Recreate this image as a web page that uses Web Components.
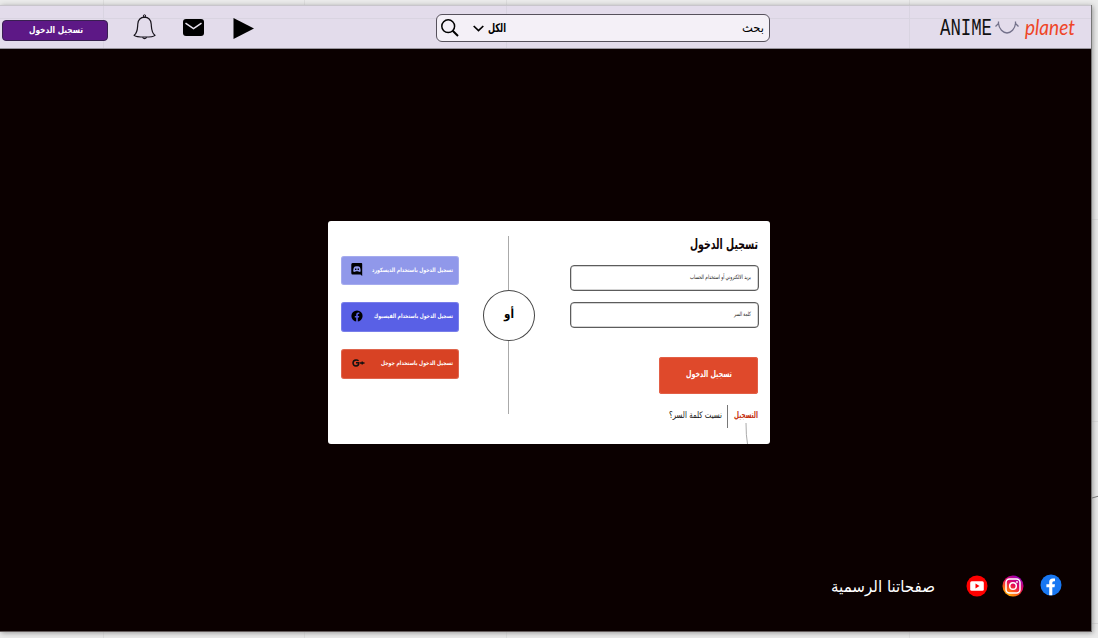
<!DOCTYPE html>
<html lang="ar"><head><meta charset="utf-8"><title>Anime planet</title>
<style>html,body{margin:0;width:1098px;height:638px;overflow:hidden;background:#eaeaea}</style></head>
<body><anime-page></anime-page>
<script>
class FitText extends HTMLElement{
  connectedCallback(){
    const a=(n,d)=>this.getAttribute(n)||d;
    const w=+a('w'),s=+a('s'),ltr=this.hasAttribute('ltr'),h=Math.ceil(s*1.6);
    this.attachShadow({mode:'open'}).innerHTML=`<style>:host{display:block;flex:none;width:${w}px;height:${h}px}svg{display:block;overflow:visible}text{font:${a('fs','normal')} ${a('wt','400')} ${s}px ${a('font',"'DejaVu Sans'")},sans-serif;fill:currentColor}</style>
    <svg width="${w}" height="${h}"><text x="${ltr?0:w}" y="${s*1.15}" direction="${ltr?'ltr':'rtl'}" textLength="${w}" lengthAdjust="spacingAndGlyphs">${this.textContent}</text></svg>`;
  }
}
customElements.define('fit-text',FitText);

const icons={
 bell:['0 0 24 26','<path d="M1.200 21.300C4.800 18.500 4.400 14.500 4.800 10C5.200 6 7.500 3.300 11.500 3.200C15.500 3.300 17.800 6 18.200 10C18.600 14.500 18.200 18.500 21.900 21.300C21 22.300 17 23 11.800 23C6.500 23 2 22.300 1.200 21.300Z" fill="none" stroke="#17131c" stroke-width="1.200"/><circle cx="11.500" cy="2" r="1.200" fill="none" stroke="#17131c"/><path d="M9.500 23.300q2 2.500 4.200 0" fill="none" stroke="#17131c" stroke-width="1.200"/>'],
 mail:['0 0 21 17','<rect width="21" height="17" rx="3"/><path d="M2.500 4.200L10.500 9.700L18.500 4.200" fill="none" stroke="#e8e2ee" stroke-width="1.500"/>'],
 play:['0 0 21 21','<path d="M.5 0L21 10.500L.5 21Z"/>'],
 search:['0 0 18 18','<circle cx="7.200" cy="7.200" r="6.400" fill="none" stroke="#000" stroke-width="1.500"/><path d="M11.700 11.700L17 17" stroke="#000" stroke-width="2"/>'],
 down:['0 0 11 7','<path d="M.7 1L5.500 5.600L10.300 1" fill="none" stroke="#000" stroke-width="1.700"/>'],
 smile:['0 0 24 14','<path d="M3.500 2.500C4 8 8 12 12 12C16 12 20 8 20.500 2.500M.5 5.500L3.500 2.500V.5M23.500 5.500L20.500 2.500V.5" fill="none" stroke="#73718a" stroke-width="1.300"/>'],
 discord:['0 0 12 13','<path d="M1.500 0H10.500Q11.200 0 11.200 1V13L9.500 11.500H1.500Q.3 11.500 .3 10V1.500Q.3 0 1.500 0Z"/><path d="M2.200 8.600Q2.300 4.300 4 3.600Q6 2.800 8 3.600Q9.600 4.300 9.700 8.600L8 8.900L7.300 8.200H4.700L4 8.900Z" fill="#9098ea"/><path d="M4 5.600h1.400v1.300H4zM6.600 5.600H8v1.300H6.600z"/>'],
 fb:['0 0 12 12','<circle cx="6" cy="6" r="5.600"/><path d="M5.200 12V7.500H3.800V5.900H5.200V4.600Q5.200 2.600 7.200 2.600H8.300V4H7.600Q6.800 4 6.800 4.800V5.900H8.200L8 7.500H6.800V12Z" fill="#5960e6"/>'],
 gplus:['0 0 13 8','<path d="M6.600 1.800Q5.500.8 4 .9Q1.100 1.100 1 4Q1.200 6.900 4 7.100Q6.900 7 6.800 3.800H4" fill="none" stroke="#111" stroke-width="1.500"/><path d="M8 4H12.500M10.200 2.500V5.500" stroke="#111" stroke-width="1.400"/>'],
 youtube:['0 0 22 22','<circle cx="11" cy="11" r="10.500" fill="#f00"/><rect x="4.200" y="6.200" width="13.600" height="9.600" rx="1.500" fill="#fff"/><path d="M9.500 8.500L13.500 11L9.500 13.500Z" fill="#f00"/>'],
 insta:['0 0 22 22','<defs><linearGradient id="g" x1=".2" y1="1" x2=".8" y2="0"><stop stop-color="#ffc400"/><stop offset=".3" stop-color="#ff5a16"/><stop offset=".55" stop-color="#e40a5c"/><stop offset="1" stop-color="#8c00c8"/></linearGradient></defs><circle cx="11" cy="11" r="10.500" fill="url(#g)"/><rect x="4" y="4" width="14" height="14" rx="3.500" fill="none" stroke="#fff" stroke-width="1.500"/><circle cx="11" cy="11" r="3.300" fill="none" stroke="#fff" stroke-width="1.500"/><circle cx="15" cy="7" r=".9" fill="#fff"/>'],
 facebook:['0 0 22 22','<circle cx="11" cy="11" r="10.500" fill="#1877f2"/><path d="M9.200 21.300V13.300H6.400V10.200H9.200V8Q9.200 4.500 12.800 4.500H15V7.200H13.800Q12.300 7.200 12.300 8.700V10.200H15L14.500 13.300H12.300V21.300Z" fill="#fff"/>']
};
customElements.define('ui-icon',class extends HTMLElement{
  connectedCallback(){
    const [box,d]=icons[this.getAttribute('name')],[,,w,h]=box.split(' ');
    this.attachShadow({mode:'open'}).innerHTML=`<style>:host{display:block;flex:none;width:${w}px;height:${h}px}svg{display:block}</style><svg width="${w}" height="${h}" viewBox="${box}">${d}</svg>`;
  }
});
function define(name,html){
  customElements.define(name,class extends HTMLElement{
    constructor(){super();const t=document.createElement('template');t.innerHTML=html;this.attachShadow({mode:'open'}).append(t.content.cloneNode(true));}
  });
}
define('site-header',`<style>
:host{display:flex;align-items:flex-start;height:44px;box-sizing:border-box;border-top:1px solid #c8c5cc;border-bottom:1px solid #98959d;padding-left:2px;
background:linear-gradient(#d9d4e1,#d9d4e1) 0 12px/100% 1px no-repeat,repeating-linear-gradient(90deg,transparent 0 103px,#d9d4e1 103px 104px,transparent 104px 201.5px),#e3dceb}
.login{margin-top:14px;width:106px;height:21px;box-sizing:border-box;border:1px solid #392051;border-radius:4px;background:#5d1886;color:#fff;display:flex;justify-content:center;padding:2px 0 0 2px}
.search{margin:8px 0 0 182px;width:334px;height:28px;box-sizing:border-box;border:1px solid #56515c;border-radius:6px;background:#f4f0f7;display:flex;align-items:flex-start;padding-left:4px}
</style>
<div class="login"><fit-text w="54" s="9" wt="700">تسجيل الدخول</fit-text></div>
<ui-icon name="bell" style="margin:8px 0 0 25px"></ui-icon><ui-icon name="mail" style="margin:13px 0 0 26px"></ui-icon><ui-icon name="play" style="margin:12px 0 0 29px"></ui-icon>
<div class="search"><ui-icon name="search" style="margin-top:4px"></ui-icon><ui-icon name="down" style="margin:10px 0 0 14px"></ui-icon><fit-text w="18" s="12" wt="700" style="margin:3px 0 0 4px">الكل</fit-text><fit-text w="22" s="12" style="margin:3px 0 0 236px">بحث</fit-text></div>
<fit-text ltr w="52" s="23" font="'Liberation Mono'" style="margin:3px 0 0 170px;color:#111">ANIME</fit-text><ui-icon name="smile" style="margin:15px 0 0 3px"></ui-icon><fit-text ltr w="50" s="21" fs="italic" font="Lato" style="margin:5px 0 0 6px;color:#ef4527">planet</fit-text>`);
define('social-login',`<style>:host{display:flex;align-items:center;height:29px;box-sizing:border-box;padding:0 6px 2px 10px;border-radius:3px;color:#fff;justify-content:space-between;box-shadow:inset 0 0 0 1px #ffffff30}</style><slot></slot>`);
define('text-field',`<style>:host{display:flex;justify-content:flex-end;width:189px;height:26px;box-sizing:border-box;border:1px solid #5c5c5c;box-shadow:inset 0 0 0 .5px #aaa;border-radius:4px;padding:6px 7px 0;color:#222}</style><slot></slot>`);
define('login-card',`<style>
:host{display:grid;grid-template-columns:118px 52px 189px;column-gap:24px;width:442px;height:223px;box-sizing:border-box;background:#fff;border-radius:3px;padding-left:13px;position:relative}
.social{display:flex;flex-direction:column;gap:17px;padding-top:35px}
.or{display:flex;flex-direction:column;align-items:center;padding-top:15px;margin-left:-1px}
.line{width:1px;background:#aaa}.ring{width:52px;height:51px;box-sizing:border-box;border:1px solid #444;border-radius:50%;display:flex;justify-content:center;padding-top:13px}
.form{display:flex;flex-direction:column;align-items:flex-end;padding-top:12px;margin-left:11px;width:189px}
.go{width:99px;height:37px;margin:29px 1px 0 0;background:#df492b;border-radius:3px;color:#fff;display:flex;justify-content:center;padding-top:10px;box-sizing:border-box;box-shadow:inset 0 0 0 1px #e35f46}
.links{display:flex;height:23px;margin:11px 1px 0 0}
.tail{position:absolute;left:416px;top:202px}
</style>
<div class="social">
<social-login style="background:#9098ea"><ui-icon name="discord"></ui-icon><fit-text w="81" s="6" wt="700">تسجيل الدخول باستخدام الديسكورد</fit-text></social-login>
<social-login style="background:#5960e6;height:30px"><ui-icon name="fb"></ui-icon><fit-text w="79" s="6" wt="700">تسجيل الدخول باستخدام الفيسبوك</fit-text></social-login>
<social-login style="background:#d84224;height:30px"><ui-icon name="gplus" style="margin-left:1px"></ui-icon><fit-text w="72" s="6" wt="700">تسجيل الدخول باستخدام جوجل</fit-text></social-login></div>
<div class="or"><div class="line" style="height:54px"></div><div class="ring"><fit-text w="10" s="12" wt="700">أو</fit-text></div><div class="line" style="height:73px"></div></div>
<div class="form"><fit-text w="68" s="14" wt="700" style="height:32px;margin-right:1px;color:#120607">تسجيل الدخول</fit-text>
<text-field><fit-text w="61" s="6">بريد الالكتروني أو استخدام الحساب</fit-text></text-field>
<text-field style="margin-top:11px"><fit-text w="17" s="6">كلمة السر</fit-text></text-field>
<div class="go"><fit-text w="46" s="9" wt="700">تسجيل الدخول</fit-text></div>
<div class="links"><fit-text w="53" s="9" style="margin:3px 5px 0 0;color:#111">نسيت كلمة السر؟</fit-text><i style="width:1px;background:#777"></i><fit-text w="24" s="9" wt="700" style="margin:3px 0 0 6px;color:#c42e0d">التسجيل</fit-text></div></div>
<svg class="tail" width="5" height="21"><path d="M2 0Q2 13 3.500 21" fill="none" stroke="#aaa"/></svg>`);
define('page-footer',`<style>:host{display:flex;justify-content:flex-end;align-items:flex-start;padding-right:29px;color:#fff}</style>
<fit-text w="104" s="16" style="margin-right:31px;margin-top:-1px">صفحاتنا الرسمية</fit-text><ui-icon name="youtube"></ui-icon><ui-icon name="insta" style="margin:0 0 0 14px"></ui-icon><ui-icon name="facebook" style="margin:-1px 0 0 16px"></ui-icon>`);
define('anime-page',`<style>
:host{display:flex;width:1098px;height:638px;padding-top:5px;box-sizing:border-box;background:linear-gradient(#ddd,#ddd) 0 219px/100% 1px no-repeat,linear-gradient(#ddd,#ddd) 0 421px/100% 1px no-repeat,linear-gradient(#d8d8d8,#d8d8d8) 0 623px/100% 1px no-repeat,repeating-linear-gradient(90deg,transparent 0 103px,#dedede 103px 104px,transparent 104px 201.5px),#ebebeb}
.screen{width:1092px;flex:none;height:627px;box-sizing:border-box;background:#0b0000;border-bottom:1px solid #635b5b;border-right:1px solid #777;box-shadow:1px 1px 5px #999}
login-card{margin:172px 0 0 328px}page-footer{margin-top:131px}
.edge{margin-top:489px;flex:none}
</style><div class="screen"><site-header></site-header><login-card></login-card><page-footer></page-footer></div>
<svg class="edge" width="7" height="6"><path d="M0 4L7 2" stroke="#777"/></svg>`);
</script></body></html>
